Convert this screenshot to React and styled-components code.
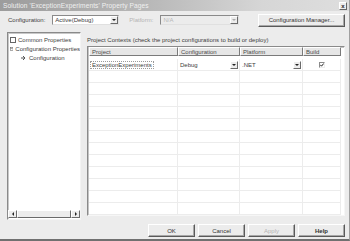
import React from 'react';
import styled, { createGlobalStyle } from 'styled-components';

const Global = createGlobalStyle`
  html, body { margin: 0; padding: 0; }
  body {
    width: 350px; height: 241px; overflow: hidden;
    background: #ececec;
    font-family: "Liberation Sans", Arial, sans-serif;
    color: #404040;
  }
`;

const Window = styled.div`
  width: 350px; height: 241px; box-sizing: border-box;
  display: flex; flex-direction: column;
  background: #ececec;
  border-bottom: 2px solid #707070;
  border-right: 1px solid #a0a0a0;
`;

const TitleBar = styled.div`
  height: 11px; flex: none;
  display: flex; align-items: center; justify-content: space-between;
  padding: 0 2px 0 3px;
  background: linear-gradient(to right, #9c9c9c, #bababa 45%, #d6d6d6 75%, #dedede);
  color: #f0f0f0; font-size: 6.6px; letter-spacing: 0.1px;
`;

const CloseBox = styled.div`
  width: 8px; height: 8px; box-sizing: border-box;
  background: #ececec; border: 1px solid; border-color: #fff #666 #666 #fff;
  display: flex; align-items: center; justify-content: center;
  font-size: 6px; line-height: 1; color: #222; font-weight: bold;
`;

const Body = styled.div`
  flex: 1; display: flex; flex-direction: column;
  padding: 2px 4px 0 7px;
  font-size: 6px;
`;

const ConfigRow = styled.div`
  display: flex; align-items: center; height: 14px;
`;

const Label = styled.span`
  color: ${p => (p.$disabled ? '#b4b4b4' : '#404040')};
  margin: 0 ${p => p.$mr || 0}px 0 ${p => p.$ml || 0}px;
  white-space: nowrap;
`;

const Combo = styled.div`
  width: ${p => p.$w}px; height: 10px; box-sizing: border-box;
  display: flex; align-items: center; justify-content: space-between;
  background: ${p => (p.$disabled ? '#ececec' : '#fff')};
  border: 1px solid; border-color: #8a8a8a #e0e0e0 #e0e0e0 #8a8a8a;
  color: ${p => (p.$disabled ? '#b8b8b8' : '#404040')};
  padding-left: 2px;
`;

const DropBtn = styled.div`
  width: 8px; height: 8px; box-sizing: border-box;
  background: #ececec; border: 1px solid; border-color: #fff #6a6a6a #6a6a6a #fff;
  display: flex; align-items: center; justify-content: center;
  &::after {
    content: ''; border-left: 2px solid transparent; border-right: 2px solid transparent;
    border-top: 2px solid ${p => (p.$disabled ? '#aaa' : '#222')};
  }
`;

const PushButton = styled.div`
  width: ${p => p.$w}px; height: ${p => p.$h || 13}px; box-sizing: border-box;
  display: flex; align-items: center; justify-content: center;
  background: #ececec;
  border: 1px solid; border-color: #fff #5a5a5a #5a5a5a #fff;
  box-shadow: inset -1px -1px 0 #a8a8a8;
  color: ${p => (p.$disabled ? '#b4b4b4' : '#333')};
  font-weight: ${p => (p.$bold ? 'bold' : 'normal')};
  white-space: nowrap;
`;

const Main = styled.div`
  flex: 1; display: flex; gap: 6px; margin-top: 5px; min-height: 0;
`;

const TreePanel = styled.div`
  width: 74px; flex: none; box-sizing: border-box;
  display: flex; flex-direction: column;
  background: #fff;
  border: 1px solid; border-color: #8a8a8a #f4f4f4 #f4f4f4 #8a8a8a;
  box-shadow: inset 1px 1px 0 #c8c8c8;
`;

const TreeList = styled.div`
  flex: 1; padding: 2px 0 0 2px; overflow: hidden;
`;

const TreeItem = styled.div`
  height: 9px; display: flex; align-items: center; gap: 2px;
  padding-left: ${p => p.$indent || 0}px;
  white-space: nowrap;
`;

const HScroll = styled.div`
  height: 8px; display: flex; background: #f2f2f2; margin: 0 0 1px 0;
`;

const ScrollArrow = styled.div`
  width: 9px; height: 8px; box-sizing: border-box; flex: none;
  background: #ececec; border: 1px solid; border-color: #fff #6a6a6a #6a6a6a #fff;
  display: flex; align-items: center; justify-content: center;
  &::after {
    content: ''; border-top: 2px solid transparent; border-bottom: 2px solid transparent;
    ${p => (p.$dir === 'left' ? 'border-right: 2px solid #222;' : 'border-left: 2px solid #222;')}
  }
`;

const ScrollThumb = styled.div`
  flex: 1; box-sizing: border-box; background: #ececec;
  border: 1px solid; border-color: #fff #6a6a6a #6a6a6a #fff;
`;

const RightPane = styled.div`
  flex: 1; display: flex; flex-direction: column; min-width: 0;
`;

const Caption = styled.div`
  height: 10px; display: flex; align-items: center; padding-top: 3px;
  white-space: nowrap;
`;

const GridBox = styled.div`
  flex: 1; margin-top: 1px; margin-bottom: 4px; box-sizing: border-box;
  background: #fff; overflow: hidden;
  border: 1px solid; border-color: #8a8a8a #f6f6f6 #f6f6f6 #8a8a8a;
  box-shadow: inset 1px 1px 0 #c4c4c4;
`;

const GridTable = styled.div`
  width: 252px; padding-left: 1px;
  display: grid; grid-template-columns: 89px 62px 63px 38px;
  grid-auto-rows: 12px;
`;

const HeadCell = styled.div`
  height: 9px; box-sizing: border-box; padding-left: 2px;
  display: flex; align-items: center;
  background: #e6e6e6;
  border: 1px solid; border-color: #fff #7a7a7a #7a7a7a #fff;
  color: #4a4a4a; white-space: nowrap; overflow: hidden;
`;

const Cell = styled.div`
  box-sizing: border-box; display: flex; align-items: center;
  justify-content: ${p => (p.$center ? 'center' : 'space-between')};
  padding: 0 1px 0 2px;
  border-right: 1px solid #ececec; border-bottom: 1px solid #ececec;
  white-space: nowrap;
`;

const Focus = styled.span`
  outline: 1px dotted #9a9a9a; outline-offset: 0; padding: 0 1px;
`;

const Check = styled.div`
  width: 6px; height: 6px; box-sizing: border-box;
  border: 1px solid; border-color: #8a8a8a #eee #eee #8a8a8a;
  background: #fff; display: flex; align-items: center; justify-content: center;
`;

const ButtonRow = styled.div`
  display: flex; justify-content: flex-end; gap: 3px;
  padding: 4px 0 5px; height: 13px; flex: none;
  box-sizing: content-box;
`;

const TreeIcon = ({ open }) => (
  <svg width="6" height="6" viewBox="0 0 6 6">
    <rect x="0.5" y="0.5" width="5" height="5" fill="#fff" stroke="#666" strokeWidth="1" />
    {open && <line x1="1" y1="2" x2="5" y2="2" stroke="#666" />}
  </svg>
);

const PageIcon = () => (
  <svg width="6" height="6" viewBox="0 0 6 6">
    <path d="M0 3 L3 3 M2 1 L4 3 L2 5" stroke="#555" strokeWidth="1" fill="none" />
  </svg>
);

const CheckMark = () => (
  <svg width="4" height="4" viewBox="0 0 4 4">
    <path d="M0.3 1.8 L1.5 3.2 L3.7 0.5" stroke="#222" strokeWidth="1" fill="none" />
  </svg>
);

const emptyRows = Array.from({ length: 12 });

export default function App() {
  return (
    <>
      <Global />
      <Window>
        <TitleBar>
          <span>Solution 'ExceptionExperiments' Property Pages</span>
          <CloseBox>x</CloseBox>
        </TitleBar>
        <Body>
          <ConfigRow>
            <Label $ml={1} $mr={7}>Configuration:</Label>
            <Combo $w={67}>
              <span>Active(Debug)</span>
              <DropBtn />
            </Combo>
            <Label $disabled $ml={10} $mr={7}>Platform:</Label>
            <Combo $w={79} $disabled>
              <span>N/A</span>
              <DropBtn $disabled />
            </Combo>
            <span style={{ flex: 1 }} />
            <PushButton $w={87}>Configuration Manager...</PushButton>
          </ConfigRow>
          <Main>
            <TreePanel>
              <TreeList>
                <TreeItem><TreeIcon />Common Properties</TreeItem>
                <TreeItem><TreeIcon open />Configuration Properties</TreeItem>
                <TreeItem $indent={11}><PageIcon /> Configuration</TreeItem>
              </TreeList>
              <HScroll>
                <ScrollArrow $dir="left" />
                <ScrollThumb />
                <ScrollArrow $dir="right" />
              </HScroll>
            </TreePanel>
            <RightPane>
              <Caption>Project Contexts (check the project configurations to build or deploy)</Caption>
              <GridBox>
                <GridTable>
                  <HeadCell>Project</HeadCell>
                  <HeadCell>Configuration</HeadCell>
                  <HeadCell>Platform</HeadCell>
                  <HeadCell>Build</HeadCell>
                  <Cell><Focus>ExceptionExperiments</Focus></Cell>
                  <Cell>Debug<DropBtn /></Cell>
                  <Cell>.NET<DropBtn /></Cell>
                  <Cell $center><Check><CheckMark /></Check></Cell>
                  {emptyRows.map((_, i) => (
                    <React.Fragment key={i}>
                      <Cell /><Cell /><Cell /><Cell />
                    </React.Fragment>
                  ))}
                </GridTable>
              </GridBox>
            </RightPane>
          </Main>
          <ButtonRow>
            <PushButton $w={47}>OK</PushButton>
            <PushButton $w={47}>Cancel</PushButton>
            <PushButton $w={47} $disabled>Apply</PushButton>
            <PushButton $w={47} $bold>Help</PushButton>
          </ButtonRow>
        </Body>
      </Window>
    </>
  );
}
